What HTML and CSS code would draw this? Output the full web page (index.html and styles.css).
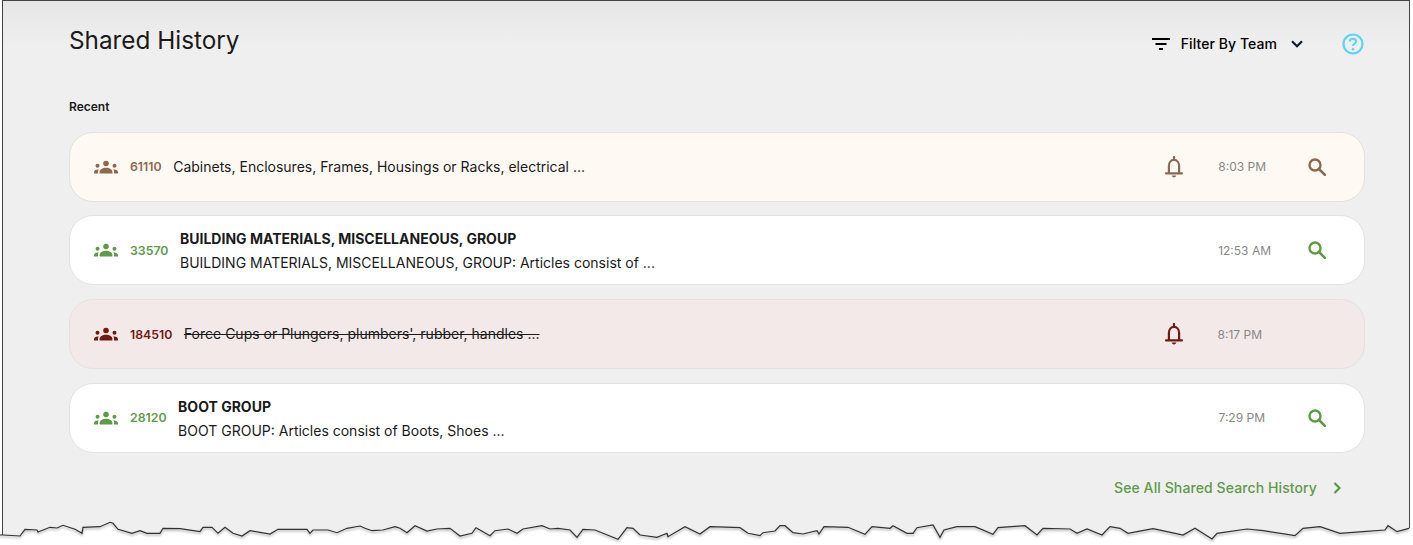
FILE: index.html
```html
<!DOCTYPE html>
<html lang="en">
<head>
    <meta charset="UTF-8">
    <title>Shared History</title>
    <link rel="stylesheet" href="styles.css">
</head>
<body>
<svg width="0" height="0" class="defs">
    <symbol id="i-team" viewBox="0 0 24 16">
        <circle cx="12" cy="4.5" r="2.8"/>
        <circle cx="3.5" cy="6.7" r="2"/>
        <circle cx="20.5" cy="6.7" r="2"/>
        <path d="M5.6 14.500v-1.700C5.600 10.500 8.500 8.700 12 8.700s6.400 1.800 6.400 4.100v1.700z"/>
        <path d="M0 14.500v-1.300c0-1.600 1.500-2.700 3.600-2.700.4 0 .8 0 1.100.1-.5.700-.7 1.500-.7 2.300v1.600z"/>
        <path d="M24 14.500v-1.300c0-1.600-1.500-2.700-3.600-2.700-.4 0-.8 0-1.100.1.500.7.700 1.500.7 2.300v1.600z"/>
    </symbol>
    <symbol id="i-bell" viewBox="0 0 18 22">
        <path d="M9 1v2.200M3.900 16.500V10c0-3.500 2.100-6.200 5.100-6.200s5.100 2.700 5.100 6.200v6.500M1 17.300h16" fill="none" stroke="currentColor" stroke-width="2.200" stroke-linecap="round"/>
        <path d="M6.800 19.500h4.400c0 1.100-1 1.900-2.200 1.900s-2.200-.8-2.200-1.900z" fill="currentColor"/>
    </symbol>
    <symbol id="i-search" viewBox="0 0 18 18">
        <circle cx="7" cy="7" r="5.500" fill="none" stroke="currentColor" stroke-width="2.400"/>
        <path d="M11 11l5.900 5.900" fill="none" stroke="currentColor" stroke-width="2.600" stroke-linecap="round"/>
    </symbol>
</svg>

<main class="page">
    <header class="top">
        <h1>Shared History</h1>
        <div class="tools">
            <div class="filter">
                <svg class="filter-icon" viewBox="0 0 18 12"><path d="M0 1h18M3.500 6h11M7 11h4" stroke="#000" stroke-width="2" fill="none"/></svg>
                <span>Filter By Team</span>
                <svg class="chevron" viewBox="0 0 12 8"><path d="M1 1.300l5 5 5-5" stroke="#0b1a33" stroke-width="2.200" fill="none"/></svg>
            </div>
            <svg class="help" viewBox="0 0 22 22">
                <circle cx="11" cy="11" r="9.500" fill="none" stroke="#5ad4f6" stroke-width="2.200"/>
                <path d="M7.900 8.600c0-1.800 1.300-2.900 3.100-2.900s3.100 1.100 3.100 2.700c0 2.300-3.100 2.300-3.100 4.700" fill="none" stroke="#5ad4f6" stroke-width="2"/>
                <circle cx="11" cy="16.200" r="1.300" fill="#5ad4f6"/>
            </svg>
        </div>
    </header>

    <h2 class="section">Recent</h2>

    <div class="list">
        <div class="row row-tan">
            <svg class="team"><use href="#i-team"/></svg>
            <span class="code">61110</span>
            <div class="text"><p>Cabinets, Enclosures, Frames, Housings or Racks, electrical ...</p></div>
            <svg class="bell"><use href="#i-bell"/></svg>
            <span class="time time-a">8:03 PM</span>
            <svg class="search"><use href="#i-search"/></svg>
        </div>
        <div class="row row-green">
            <svg class="team"><use href="#i-team"/></svg>
            <span class="code">33570</span>
            <div class="text">
                <h3>BUILDING MATERIALS, MISCELLANEOUS, GROUP</h3>
                <p>BUILDING MATERIALS, MISCELLANEOUS, GROUP: Articles consist of ...</p>
            </div>
            <span class="time time-b">12:53 AM</span>
            <svg class="search"><use href="#i-search"/></svg>
        </div>
        <div class="row row-red">
            <svg class="team"><use href="#i-team"/></svg>
            <span class="code">184510</span>
            <div class="text"><p class="struck">Force Cups or Plungers, plumbers', rubber, handles ...</p></div>
            <svg class="bell"><use href="#i-bell"/></svg>
            <span class="time time-c">8:17 PM</span>
            <div class="search"></div>
        </div>
        <div class="row row-green">
            <svg class="team"><use href="#i-team"/></svg>
            <span class="code">28120</span>
            <div class="text">
                <h3>BOOT GROUP</h3>
                <p>BOOT GROUP: Articles consist of Boots, Shoes ...</p>
            </div>
            <span class="time time-d">7:29 PM</span>
            <svg class="search"><use href="#i-search"/></svg>
        </div>
    </div>

    <a class="see-all" href="#">
        <span>See All Shared Search History</span>
        <svg class="see-all-arrow" viewBox="0 0 8 12"><path d="M1.500 1l5 5-5 5" stroke="#5a9a46" stroke-width="2.200" fill="none"/></svg>
    </a>
</main>

<!-- torn paper edge over the bottom of the page -->
<svg class="torn" viewBox="0 500 1413 45" width="1413" height="45">
    <defs>
        <path id="tornEdge" d="M-5 535L2.700 535L20 536L25 529.300L37 530L38 532L50 527.300L57 528L63 525.300L75 529.300L82 533.300L83 527.300L100 526.700L110 522.300L113 523.300L118 529.300L132 533.300L140 530.700L147 533.300L160 533.300L163 528.300L180 528.700L200 531.700L203 527.300L212 527.300L218 533.300L225 527.300L233 533.300L242 536L250 530.700L270 534L278 529.300L307 529.300L310 533.300L313 530L328 530L337 532.700L347 528.300L360 526L365 528.300L372 530.700L383 530L395 526.700L400 528.300L407 532.700L415 525.700L427 531L437 529L450 528.300L460 536L472 533.300L476 527.700L490 535.700L495 530.700L508 529L517 533.300L523 529L542 525.700L550 529L558 528.300L570 530L577 537.300L583 529.300L595 530L618 539.300L627 527.700L633 528.300L640 535L657 537.300L667 533.300L668 536.700L685 526.700L700 534L710 526.700L740 527.700L748 533.300L760 535.700L763 532.700L775 531L780 525.700L785 525.700L793 532.700L803 534L817 530.700L819 534L824 526.700L848 527.300L865 534.300L872 526.700L890 528.300L893 525.700L907 533.300L913 533.300L917 527.700L933 525L940 537.300L944 530L957 526.700L975 526.700L993 534.300L998 527.700L1025 525.700L1037 535L1043 528.300L1070 529L1077 533.300L1087 529L1102 535L1110 526.700L1120 528.300L1128 533.300L1153 528.700L1167 531.700L1183 535L1195 528.300L1212 539L1217 533.300L1247 529L1263 530.700L1295 535.700L1303 528.300L1320 526.700L1340 533.300L1363 531.700L1385 530L1388 525.700L1397 531.700L1409 528.300"/>
        <filter id="tornShadow" x="-1%" y="-50%" width="102%" height="200%">
            <feDropShadow dx="0" dy="1.500" stdDeviation="1" flood-color="#000" flood-opacity="0.4"/>
        </filter>
    </defs>
    <path class="torn-fill" d="M-5 535L2.700 535L20 536L25 529.300L37 530L38 532L50 527.300L57 528L63 525.300L75 529.300L82 533.300L83 527.300L100 526.700L110 522.300L113 523.300L118 529.300L132 533.300L140 530.700L147 533.300L160 533.300L163 528.300L180 528.700L200 531.700L203 527.300L212 527.300L218 533.300L225 527.300L233 533.300L242 536L250 530.700L270 534L278 529.300L307 529.300L310 533.300L313 530L328 530L337 532.700L347 528.300L360 526L365 528.300L372 530.700L383 530L395 526.700L400 528.300L407 532.700L415 525.700L427 531L437 529L450 528.300L460 536L472 533.300L476 527.700L490 535.700L495 530.700L508 529L517 533.300L523 529L542 525.700L550 529L558 528.300L570 530L577 537.300L583 529.300L595 530L618 539.300L627 527.700L633 528.300L640 535L657 537.300L667 533.300L668 536.700L685 526.700L700 534L710 526.700L740 527.700L748 533.300L760 535.700L763 532.700L775 531L780 525.700L785 525.700L793 532.700L803 534L817 530.700L819 534L824 526.700L848 527.300L865 534.300L872 526.700L890 528.300L893 525.700L907 533.300L913 533.300L917 527.700L933 525L940 537.300L944 530L957 526.700L975 526.700L993 534.300L998 527.700L1025 525.700L1037 535L1043 528.300L1070 529L1077 533.300L1087 529L1102 535L1110 526.700L1120 528.300L1128 533.300L1153 528.700L1167 531.700L1183 535L1195 528.300L1212 539L1217 533.300L1247 529L1263 530.700L1295 535.700L1303 528.300L1320 526.700L1340 533.300L1363 531.700L1385 530L1388 525.700L1397 531.700L1409 528.300L1418 528.300V550H-5Z"/>
    <use class="torn-line" href="#tornEdge" filter="url(#tornShadow)"/>
</svg>
</body>
</html>
```

FILE: styles.css
```css
html, body {
    margin: 0;
    padding: 0;
    height: 545px;
    overflow: hidden;
    background-color: #fff;
}
body {
    font-family: Inter, "Liberation Sans", sans-serif;
    color: #1a1a1a;
    position: relative;
}
.defs {
    position: absolute;
}
.page {
    box-sizing: border-box;
    width: 1408px;
    height: 545px;
    margin-left: 2px;
    border-top: 1px solid #444;
    border-left: 1px solid #444;
    border-right: 1px solid #444;
    padding: 0 44px 0 66px;
    background: linear-gradient(#e6e6e6 0, #efefef 45px);
}
.top {
    display: flex;
    justify-content: space-between;
    align-items: flex-start;
    padding-top: 25px;
    height: 59px;
    box-sizing: content-box;
}
.top h1 {
    margin: 0;
    font-size: 24.3px;
    font-weight: 400;
    line-height: 29px;
}
.tools {
    display: flex;
    align-items: center;
    height: 36px;
    margin-right: 1px;
}
.filter {
    display: flex;
    align-items: center;
    font-size: 14px;
    font-weight: 500;
    letter-spacing: 0.07px;
    color: #000;
    margin-top: -1px;
}
.filter-icon {
    width: 18px;
    height: 12px;
    margin-right: 11px;
}
.chevron {
    width: 12px;
    height: 8px;
    margin-left: 14px;
}
.help {
    width: 22px;
    height: 22px;
    margin-left: 39px;
}
.section {
    margin: 0;
    font-size: 12px;
    font-weight: 600;
    line-height: 14px;
    padding-top: 15px;
}
.list {
    display: flex;
    flex-direction: column;
    gap: 13.7px;
    margin-top: 17.7px;
}
.row {
    box-sizing: border-box;
    height: 70px;
    display: flex;
    align-items: center;
    padding: 0 38px 0 24px;
    border: 1px solid #e2e2e2;
    border-radius: 24px;
    background-color: #fff;
}
.row-tan {
    background-color: #fef9f3;
    color: #8a6a52;
}
.row-green {
    color: #5f9a48;
}
.row-red {
    background-color: #f3e9e9;
    color: #701a10;
}
.team {
    width: 24px;
    height: 16px;
    fill: currentColor;
    margin-right: 12px;
    flex: none;
}
.code {
    font-size: 12.3px;
    font-weight: 600;
    margin-right: 11.6px;
}
.text {
    flex: 1;
    min-width: 0;
    color: #1a1a1a;
}
.text h3 {
    margin: 2px 0 8px;
    font-size: 14px;
    font-weight: 700;
    line-height: 16px;
}
.text p {
    margin: 0;
    font-size: 14px;
    line-height: 16px;
}
.struck {
    text-decoration: line-through;
}
.bell {
    width: 18px;
    height: 22px;
    margin-right: 35px;
    flex: none;
}
.time {
    font-size: 12px;
    color: #888;
    font-weight: 400;
}
.time-a { margin-right: 42px; }
.time-b { margin-right: 37px; }
.time-c { margin-right: 46px; }
.time-d { margin-right: 43px; }
.search {
    width: 18px;
    height: 18px;
    flex: none;
}
.see-all {
    display: flex;
    justify-content: flex-end;
    align-items: center;
    margin-top: 26.7px;
    padding-right: 24px;
    font-size: 14px;
    font-weight: 500;
    letter-spacing: 0.1px;
    color: #5f9a48;
    text-decoration: none;
    line-height: 17px;
}
.see-all-arrow {
    width: 8px;
    height: 12px;
    margin-left: 16px;
}
.torn {
    position: absolute;
    left: 0;
    top: 500px;
    display: block;
}
.torn-fill {
    fill: #fff;
}
.torn-line {
    fill: none;
    stroke: #333;
    stroke-width: 1.2;
}
```
